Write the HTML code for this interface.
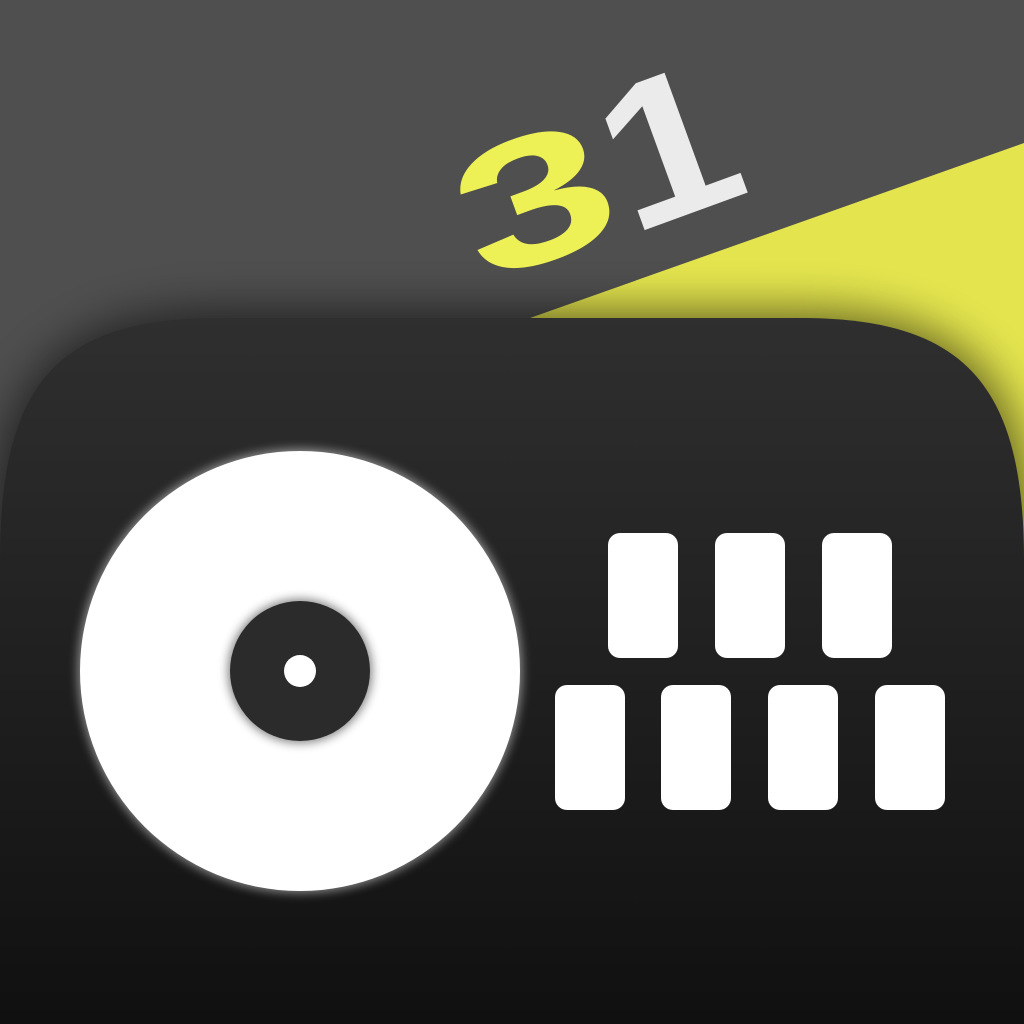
<!DOCTYPE html>
<html><head><style>html,body{margin:0;padding:0;background:#4f4f4f}svg{display:block}
.d{position:absolute;width:300px;height:300px;display:flex;align-items:center;justify-content:center;font-family:"Liberation Sans",Arial,sans-serif;font-weight:700;line-height:1}
</style></head><body>
<div style="position:relative;width:1024px;height:1024px;overflow:hidden">
<svg width="1024" height="1024" viewBox="0 0 1024 1024" xmlns="http://www.w3.org/2000/svg">
<defs>
<linearGradient id="body" x1="0" y1="0" x2="0" y2="1">
<stop offset="0" stop-color="#2f2f2f"/><stop offset="1" stop-color="#101010"/>
</linearGradient>
<filter id="sh" x="-20%" y="-20%" width="140%" height="140%"><feGaussianBlur stdDeviation="22"/></filter>
<filter id="glow" x="-20%" y="-20%" width="140%" height="140%"><feGaussianBlur stdDeviation="5"/></filter>
</defs>
<rect width="1024" height="1024" fill="#4f4f4f"/>
<polygon points="530,318 1024,143 1024,1024 530,1024" fill="#e3e44e"/>
<path d="M-10,1024 L-10,560 C-10,380 60,310 220,310 L800,310 C970,310 1034,380 1034,560 L1034,1024 Z" fill="#000" opacity="0.55" filter="url(#sh)"/>
<path d="M0,1024 L0,560 C0,380 60,318 220,318 L800,318 C960,318 1024,380 1024,560 L1024,1024 Z" fill="url(#body)"/>
<circle cx="300" cy="671" r="222" fill="#fff" opacity="0.5" filter="url(#glow)"/>
<circle cx="300" cy="671" r="220" fill="#fff"/>
<circle cx="300" cy="671" r="72" fill="#000" opacity="0.5" filter="url(#glow)"/>
<circle cx="300" cy="671" r="70" fill="#2b2b2b"/>
<circle cx="300" cy="671" r="16" fill="#fff"/>
<g fill="#fff">
<rect x="608" y="533" width="70" height="125" rx="12"/>
<rect x="715" y="533" width="70" height="125" rx="12"/>
<rect x="822" y="533" width="70" height="125" rx="12"/>
<rect x="555" y="685" width="70" height="125" rx="12"/>
<rect x="661" y="685" width="70" height="125" rx="12"/>
<rect x="768" y="685" width="70" height="125" rx="12"/>
<rect x="875" y="685" width="70" height="125" rx="12"/>
</g>
</svg>
<div class="d" style="left:385px;top:50px;font-size:180px;color:#eef155;transform:rotate(-20deg) scaleX(1.55)">3</div>
<div class="d" style="left:518px;top:-4px;font-size:205px;color:#ebebeb;transform:rotate(-20deg) scaleX(1.15)">1</div>
</div>
</body></html>
